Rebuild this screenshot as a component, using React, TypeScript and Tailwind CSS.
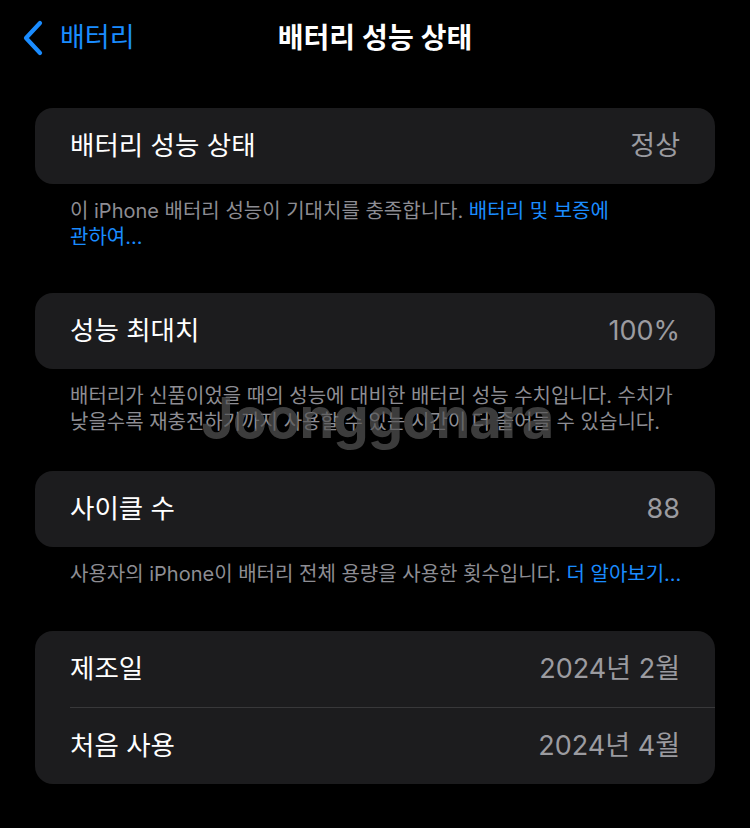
import { ReactNode } from 'react';

interface Row {
  label: string;
  value: string;
}

const font = { fontFamily: '"Inter", "Noto Sans CJK KR", sans-serif' };

function Card({ rows }: { rows: Row[] }) {
  return (
    <div className="rounded-[18px] bg-[#1c1c1e] overflow-hidden">
      {rows.map((r, i) => (
        <div key={r.label} className="pl-[35px]">
          {i > 0 && <div className="h-px bg-[#38383a]" />}
          <div className="h-[76px] flex items-center justify-between pr-[35px]">
            <span className="text-[26.5px] text-white">{r.label}</span>
            <span className="text-[27px] text-[#9b9ba0]">{r.value}</span>
          </div>
        </div>
      ))}
    </div>
  );
}

function Footer({ children }: { children: ReactNode }) {
  return (
    <div className="pl-[35px] pt-[14px] text-[20px] leading-[26px] text-[#8d8d93] whitespace-nowrap">
      {children}
    </div>
  );
}

export default function App() {
  return (
    <div className="relative w-[750px] h-[828px] bg-black overflow-hidden" style={font}>
      {/* nav bar */}
      <div className="relative h-[76px] flex items-center">
        <div className="flex items-center pl-[22px] gap-[16px] text-[#1a8cff]">
          <svg width="22" height="36" viewBox="0 0 22 36" fill="none">
            <path d="M18 3 L4 18 L18 33" stroke="#1a8cff" strokeWidth="4.2" strokeLinecap="round" strokeLinejoin="round" />
          </svg>
          <span className="text-[27px]">배터리</span>
        </div>
        <div className="absolute inset-x-0 text-center text-[28px] font-semibold text-white pointer-events-none">
          배터리 성능 상태
        </div>
      </div>

      <div className="px-[35px] pt-[32px]">
        <Card rows={[{ label: '배터리 성능 상태', value: '정상' }]} />
        <Footer>
          이 iPhone 배터리 성능이 기대치를 충족합니다. <span className="text-[#1a8cff]">배터리 및 보증에</span>
          <br />
          <span className="text-[#1a8cff]">관하여...</span>
        </Footer>

        <div className="h-[43px]" />
        <Card rows={[{ label: '성능 최대치', value: '100%' }]} />
        <Footer>
          배터리가 신품이었을 때의 성능에 대비한 배터리 성능 수치입니다. 수치가
          <br />
          낮을수록 재충전하기까지 사용할 수 있는 시간이 더 줄어들 수 있습니다.
        </Footer>

        <div className="h-[36px]" />
        <Card rows={[{ label: '사이클 수', value: '88' }]} />
        <Footer>
          사용자의 iPhone이 배터리 전체 용량을 사용한 횟수입니다. <span className="text-[#1a8cff]">더 알아보기...</span>
        </Footer>

        <div className="h-[44px]" />
        <Card
          rows={[
            { label: '제조일', value: '2024년 2월' },
            { label: '처음 사용', value: '2024년 4월' },
          ]}
        />
      </div>

      {/* watermark */}
      <div className="absolute left-[201px] top-[390px] text-[56px] leading-none font-bold text-[#555555]/70 tracking-[-1px] pointer-events-none select-none">
        Joonggonara
      </div>
    </div>
  );
}
